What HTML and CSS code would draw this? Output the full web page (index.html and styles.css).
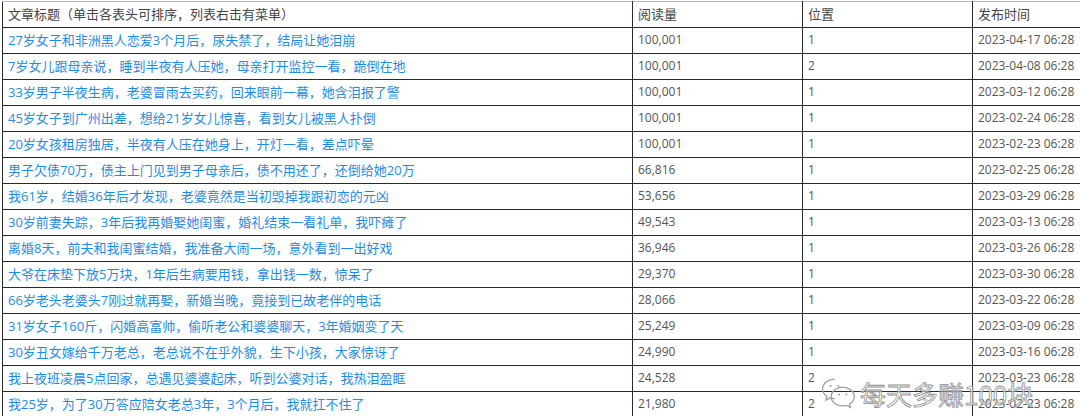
FILE: index.html
```html
<!DOCTYPE html>
<html lang="zh">
<head>
<meta charset="utf-8">
<link rel="stylesheet" href="styles.css">
</head>
<body>
<div class="page">
<table class="grid">
  <colgroup>
    <col class="c-title"><col class="c-num"><col class="c-pos"><col class="c-date">
  </colgroup>
  <thead>
    <tr><th>文章标题（单击各表头可排序，列表右击有菜单）</th><th>阅读量</th><th>位置</th><th>发布时间</th></tr>
  </thead>
  <tbody>
    <tr><td class="t">27岁女子和非洲黑人恋爱3个月后，尿失禁了，结局让她泪崩</td><td class="n">100,001</td><td class="n">1</td><td class="n">2023-04-17 06:28</td></tr>
    <tr><td class="t">7岁女儿跟母亲说，睡到半夜有人压她，母亲打开监控一看，跪倒在地</td><td class="n">100,001</td><td class="n">2</td><td class="n">2023-04-08 06:28</td></tr>
    <tr><td class="t">33岁男子半夜生病，老婆冒雨去买药，回来眼前一幕，她含泪报了警</td><td class="n">100,001</td><td class="n">1</td><td class="n">2023-03-12 06:28</td></tr>
    <tr><td class="t">45岁女子到广州出差，想给21岁女儿惊喜，看到女儿被黑人扑倒</td><td class="n">100,001</td><td class="n">1</td><td class="n">2023-02-24 06:28</td></tr>
    <tr><td class="t">20岁女孩租房独居，半夜有人压在她身上，开灯一看，差点吓晕</td><td class="n">100,001</td><td class="n">1</td><td class="n">2023-02-23 06:28</td></tr>
    <tr><td class="t">男子欠债70万，债主上门见到男子母亲后，债不用还了，还倒给她20万</td><td class="n">66,816</td><td class="n">1</td><td class="n">2023-02-25 06:28</td></tr>
    <tr><td class="t">我61岁，结婚36年后才发现，老婆竟然是当初毁掉我跟初恋的元凶</td><td class="n">53,656</td><td class="n">1</td><td class="n">2023-03-29 06:28</td></tr>
    <tr><td class="t">30岁前妻失踪，3年后我再婚娶她闺蜜，婚礼结束一看礼单，我吓瘫了</td><td class="n">49,543</td><td class="n">1</td><td class="n">2023-03-13 06:28</td></tr>
    <tr><td class="t">离婚8天，前夫和我闺蜜结婚，我准备大闹一场，意外看到一出好戏</td><td class="n">36,946</td><td class="n">1</td><td class="n">2023-03-26 06:28</td></tr>
    <tr><td class="t">大爷在床垫下放5万块，1年后生病要用钱，拿出钱一数，惊呆了</td><td class="n">29,370</td><td class="n">1</td><td class="n">2023-03-30 06:28</td></tr>
    <tr><td class="t">66岁老头老婆头7刚过就再娶，新婚当晚，竟接到已故老伴的电话</td><td class="n">28,066</td><td class="n">1</td><td class="n">2023-03-22 06:28</td></tr>
    <tr><td class="t">31岁女子160斤，闪婚高富帅，偷听老公和婆婆聊天，3年婚姻变了天</td><td class="n">25,249</td><td class="n">1</td><td class="n">2023-03-09 06:28</td></tr>
    <tr><td class="t">30岁丑女嫁给千万老总，老总说不在乎外貌，生下小孩，大家惊讶了</td><td class="n">24,990</td><td class="n">1</td><td class="n">2023-03-16 06:28</td></tr>
    <tr><td class="t">我上夜班凌晨5点回家，总遇见婆婆起床，听到公婆对话，我热泪盈眶</td><td class="n">24,528</td><td class="n">2</td><td class="n">2023-03-23 06:28</td></tr>
    <tr><td class="t">我25岁，为了30万答应陪女老总3年，3个月后，我就扛不住了</td><td class="n">21,980</td><td class="n">2</td><td class="n">2023-02-23 06:28</td></tr>
  </tbody>
</table>
<div class="watermark">
  <svg class="wm-icon" width="38" height="36" viewBox="0 0 36 34" fill="none" stroke="#a0a0a0" stroke-width="1.2">
    <path d="M14 3C7.4 3 2.5 7.2 2.5 12.3c0 2.9 1.6 5.4 4.1 7.1l-1 3.4 3.9-2.1c1.4.4 2.9.6 4.5.6"/>
    <path d="M21.5 10.5c-6.1 0-11 4-11 8.9s4.9 8.9 11 8.9c1.3 0 2.6-.2 3.8-.5l3.5 1.9-.9-3.1c2.7-1.6 4.6-4.2 4.6-7.2 0-4.9-4.9-8.9-11-8.9z"/>
    <circle cx="10" cy="9.5" r="1" fill="#a0a0a0" stroke="none"/>
    <circle cx="17.5" cy="9.5" r="1" fill="#a0a0a0" stroke="none"/>
    <circle cx="18" cy="17.5" r="1" fill="#a0a0a0" stroke="none"/>
    <circle cx="25" cy="17.5" r="1" fill="#a0a0a0" stroke="none"/>
  </svg>
  <span class="wm-text">每天多赚100块</span>
</div>
</div>
</body>
</html>
```

FILE: styles.css
```css
html, body {
  margin: 0;
  padding: 0;
  background: #fff;
  overflow: hidden;
}
.page {
  position: relative;
  width: 1080px;
  height: 416px;
  overflow: hidden;
  padding: 1px 0 0 2px;
  box-sizing: border-box;
}
.grid {
  border-collapse: collapse;
  table-layout: fixed;
  width: 1140px;
  font-family: "Open Sans", "Noto Sans CJK SC", sans-serif;
  font-size: 13px;
  color: #555;
}
.c-title { width: 630px; }
.c-num { width: 170px; }
.c-pos { width: 170px; }
.c-date { width: 170px; }
.grid th, .grid td {
  height: 26px;
  padding: 0 0 1px 5px;
  border: 1px solid #2a2a2a;
  text-align: left;
  font-weight: normal;
  white-space: nowrap;
  overflow: hidden;
  line-height: 24px;
  box-sizing: border-box;
}
.grid th {
  color: #444;
  border-top-color: #bbb;
}
.grid td.t {
  color: #1e8ce6;
}
.grid td.n {
  font-size: 12px;
}
.watermark {
  position: absolute;
  left: 820px;
  top: 376px;
  display: flex;
  align-items: center;
  gap: 2px;
}
.wm-text {
  font-family: "Noto Sans CJK SC", sans-serif;
  font-size: 26px;
  line-height: 34px;
  color: rgba(255, 255, 255, 0.55);
  -webkit-text-stroke: 0.8px #8f8f8f;
}
```
